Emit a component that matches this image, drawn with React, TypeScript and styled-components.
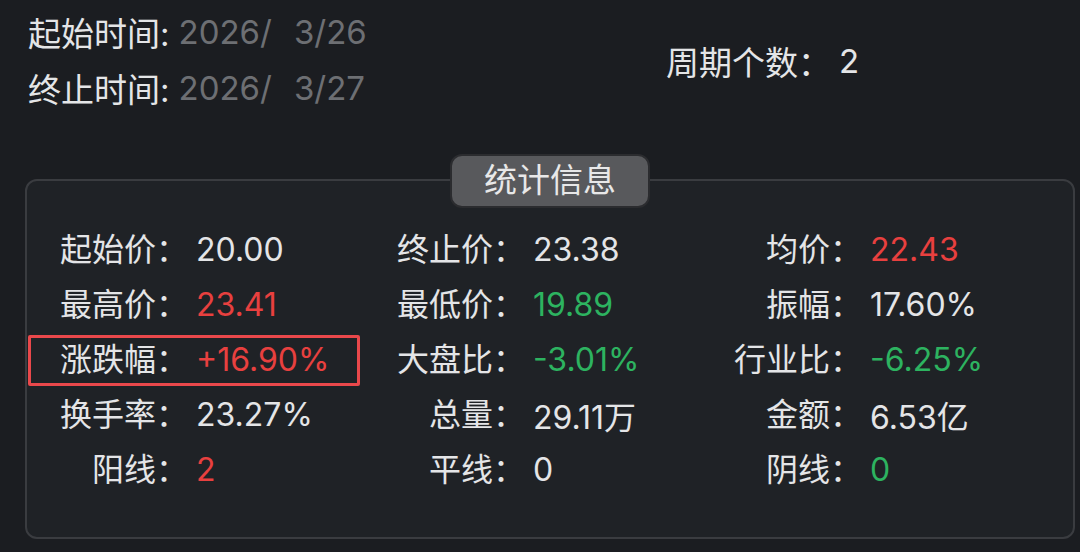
import React from 'react';
import styled, { createGlobalStyle } from 'styled-components';

const GlobalStyle = createGlobalStyle`
  html, body { margin: 0; padding: 0; background: #1b1d21; }
  body {
    font-family: Inter, "Noto Sans CJK SC", sans-serif;
    color: #e4e5e7;
    width: 1080px;
    height: 552px;
    overflow: hidden;
  }
`;

const Page = styled.div`
  width: 1080px;
  height: 552px;
  box-sizing: border-box;
  padding: 4px 5px 0 25px;
  display: flex;
  flex-direction: column;
`;

const Header = styled.div`
  display: flex;
  align-items: center;
  padding-left: 3px;
  height: 112px;
`;

const DateCol = styled.div`
  display: flex;
  flex-direction: column;
  width: 638px;
`;

const DateRow = styled.div`
  display: flex;
  align-items: center;
  height: 56px;
  font-size: 33px;
  gap: 9px;
`;

const DateLabel = styled.span`
  color: #e4e5e7;
`;

const DateValue = styled.span`
  color: #6d6f73;
  display: flex;
  gap: 22px;
`;

const Period = styled.div`
  font-size: 33px;
  display: flex;
  align-items: center;
  gap: 8px;
  padding-top: 2px;
`;

const Panel = styled.section`
  position: relative;
  margin-top: 63px;
  height: 360px;
  box-sizing: border-box;
  border: 2px solid #3a3c40;
  border-radius: 12px;
  background: #1f2226;
  padding-top: 38px;
`;

const Legend = styled.div`
  position: absolute;
  top: -27px;
  left: 50%;
  transform: translateX(-50%);
  width: 200px;
  height: 54px;
  box-sizing: border-box;
  border: 2px solid #2b2c2f;
  border-radius: 12px;
  background: #58595c;
  color: #e8e8e8;
  font-size: 33px;
  padding-bottom: 6px;
  display: flex;
  align-items: center;
  justify-content: center;
`;

const StatGrid = styled.div`
  display: grid;
  grid-template-columns: repeat(3, 337px);
  grid-auto-rows: 55px;
  font-size: 32px;
`;

const Cell = styled.div<{ $highlight?: boolean }>`
  position: relative;
  display: grid;
  grid-template-columns: 161px auto;
  column-gap: 8px;
  align-items: center;
  ${(p) =>
    p.$highlight
      ? `
    &::after {
      content: '';
      position: absolute;
      left: 1px;
      top: 6px;
      width: 332px;
      height: 51px;
      box-sizing: border-box;
      border: 3px solid #e9484b;
      border-radius: 2px;
    }
  `
      : ''}
`;

const Label = styled.span`
  text-align: right;
  white-space: nowrap;
`;

type Tone = 'up' | 'down' | 'plain';

const toneColor: Record<Tone, string> = {
  up: '#e8403f',
  down: '#2db360',
  plain: '#e4e5e7',
};

const Value = styled.span<{ $tone: Tone }>`
  color: ${(p) => toneColor[p.$tone]};
  white-space: nowrap;
  padding-top: 6px;
`;

const stats: { label: string; value: string; tone: Tone; highlight?: boolean }[] = [
  { label: '起始价：', value: '20.00', tone: 'plain' },
  { label: '终止价：', value: '23.38', tone: 'plain' },
  { label: '均价：', value: '22.43', tone: 'up' },
  { label: '最高价：', value: '23.41', tone: 'up' },
  { label: '最低价：', value: '19.89', tone: 'down' },
  { label: '振幅：', value: '17.60%', tone: 'plain' },
  { label: '涨跌幅：', value: '+16.90%', tone: 'up', highlight: true },
  { label: '大盘比：', value: '-3.01%', tone: 'down' },
  { label: '行业比：', value: '-6.25%', tone: 'down' },
  { label: '换手率：', value: '23.27%', tone: 'plain' },
  { label: '总量：', value: '29.11万', tone: 'plain' },
  { label: '金额：', value: '6.53亿', tone: 'plain' },
  { label: '阳线：', value: '2', tone: 'up' },
  { label: '平线：', value: '0', tone: 'plain' },
  { label: '阴线：', value: '0', tone: 'down' },
];

export default function App() {
  return (
    <>
      <GlobalStyle />
      <Page>
        <Header>
          <DateCol>
            <DateRow>
              <DateLabel>起始时间:</DateLabel>
              <DateValue>
                <span>2026/</span>
                <span>3/26</span>
              </DateValue>
            </DateRow>
            <DateRow>
              <DateLabel>终止时间:</DateLabel>
              <DateValue>
                <span>2026/</span>
                <span>3/27</span>
              </DateValue>
            </DateRow>
          </DateCol>
          <Period>
            <span>周期个数：</span>
            <span>2</span>
          </Period>
        </Header>
        <Panel>
          <Legend>统计信息</Legend>
          <StatGrid>
            {stats.map((s) => (
              <Cell key={s.label} $highlight={s.highlight}>
                <Label>{s.label}</Label>
                <Value $tone={s.tone}>{s.value}</Value>
              </Cell>
            ))}
          </StatGrid>
        </Panel>
      </Page>
    </>
  );
}
